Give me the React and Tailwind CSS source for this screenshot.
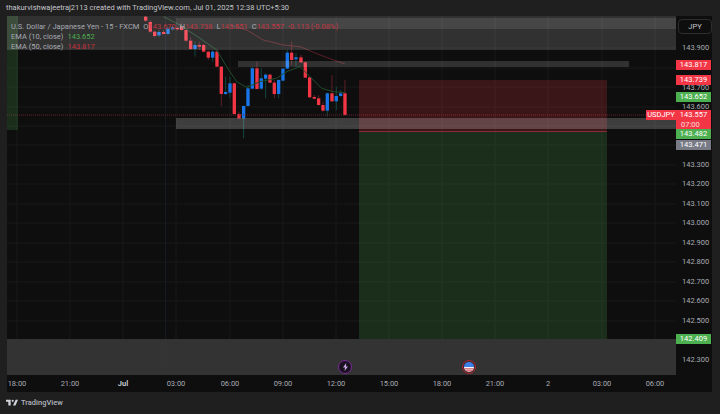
const candles = [
  [437, 50, 62, 48, 66, 'r'], [451, 66, 95, 60, 98, 'r'], [464, 95, 108, 92, 112, 'r'], [477, 96, 106, 90, 112, 'b'],
  [491, 96, 102, 90, 104, 'r'], [504, 86, 102, 80, 104, 'b'], [518, 82, 88, 78, 92, 'b'], [532, 84, 88, 80, 92, 'r'],
  [545, 78, 90, 70, 92, 'r'], [558, 90, 122, 88, 125, 'r'], [572, 122, 147, 112, 150, 'r'], [585, 135, 147, 125, 170, 'b'],
  [598, 135, 140, 125, 150, 'r'], [611, 135, 155, 132, 157, 'r'], [625, 155, 173, 152, 180, 'r'], [638, 155, 173, 150, 185, 'b'],
  [651, 155, 200, 148, 202, 'r'], [664, 200, 282, 198, 318, 'r'], [677, 276, 282, 230, 285, 'b'], [690, 250, 278, 230, 295, 'b'],
  [703, 250, 342, 248, 344, 'r'], [717, 342, 355, 335, 357, 'r'], [731, 318, 355, 316, 415, 'b'], [744, 265, 318, 255, 320, 'b'],
  [757, 205, 266, 200, 268, 'b'], [771, 205, 267, 185, 268, 'r'], [784, 235, 266, 205, 270, 'b'], [797, 224, 236, 220, 295, 'b'],
  [810, 224, 248, 222, 250, 'r'], [823, 248, 282, 240, 295, 'r'], [836, 240, 282, 238, 295, 'b'], [849, 206, 242, 204, 244, 'b'],
  [862, 158, 206, 150, 208, 'b'], [875, 158, 180, 125, 195, 'r'], [888, 172, 178, 160, 200, 'b'], [903, 172, 187, 165, 189, 'r'],
  [916, 187, 233, 185, 235, 'r'], [929, 232, 292, 230, 294, 'r'], [943, 291, 296, 285, 298, 'r'], [956, 295, 315, 285, 317, 'r'],
  [969, 315, 332, 305, 335, 'r'], [982, 280, 332, 278, 350, 'b'], [996, 280, 304, 225, 306, 'r'], [1009, 288, 304, 260, 330, 'b'],
  [1022, 280, 288, 270, 290, 'b'], [1035, 280, 345, 240, 347, 'r'],
];

const greenEma = '490,50 540,75 600,115 650,150 680,200 710,245 740,262 780,245 830,235 860,215 900,200 925,225 965,265 1000,275 1035,278';
const redEma = '690,75 740,90 790,120 850,135 900,140 960,165 1035,192';

const gridX = [17, 70, 123, 176, 230, 283, 336, 389, 442, 495, 548, 602, 655];
const gridY = [48, 68, 87, 107, 126, 145, 165, 184, 204, 223, 243, 262, 282, 301, 321, 340, 360];

const axisPrices = [
  ['143.900', 48], ['143.800', 68], ['143.700', 88], ['143.600', 107], ['143.300', 165], ['143.200', 184],
  ['143.100', 204], ['143.000', 223], ['142.900', 243], ['142.800', 262], ['142.700', 282], ['142.600', 301],
  ['142.500', 321], ['142.300', 360],
];

const priceTags = [
  ['143.817', 60, 'bg-[#f23645]'], ['143.739', 75, 'bg-[#f23645]'], ['143.652', 92, 'bg-[#4caf50]'],
  ['143.482', 129, 'bg-[#4caf50]'], ['143.471', 140, 'bg-[#787b86]'], ['142.409', 334, 'bg-[#4caf50]'],
];

const timeLabels = [
  ['18:00', 17], ['21:00', 70], ['Jul', 123, true], ['03:00', 176], ['06:00', 230], ['09:00', 283], ['12:00', 336],
  ['15:00', 389], ['18:00', 442], ['21:00', 495], ['2', 548], ['03:00', 602], ['06:00', 655],
];

// chart is drawn in page pixels, plot starts at 7,16
function ChartDrawing() {
  return (
    <svg className="absolute inset-0" width="669" height="359" viewBox="7 16 669 359">
      {gridX.map((x) => (
        <line key={x} x1={x} x2={x} y1="16" y2="375" stroke="#181818" strokeWidth="1" />
      ))}
      {gridY.map((y) => (
        <line key={y} x1="7" x2="676" y1={y} y2={y} stroke="#181818" strokeWidth="1" />
      ))}
      <line x1="165.5" x2="165.5" y1="16" y2="375" stroke="#151b24" strokeWidth="1" />
      {candles.map(([x, top, bottom, wickTop, wickBottom, c]) => (
        <g key={x} transform="scale(0.3333)">
          <line x1={x} x2={x} y1={wickTop} y2={wickBottom} stroke={c === 'r' ? '#5e2027' : '#14473f'} strokeWidth="3" />
          <rect x={x - 5} y={top} width="10" height={bottom - top} fill={c === 'r' ? '#f23645' : '#1976e8'} />
        </g>
      ))}
      <polyline points={greenEma} transform="scale(0.3333)" fill="none" stroke="#1f4d2a" strokeWidth="3" />
      <polyline points={redEma} transform="scale(0.3333)" fill="none" stroke="#5a1f26" strokeWidth="3" />
      <line x1="7" x2="676" y1="115" y2="115" stroke="#6b2028" strokeWidth="1" strokeDasharray="1 1" />
    </svg>
  );
}

function LogoMark() {
  return (
    <svg width="12" height="7" viewBox="0 0 36 20" fill="#d1d4dc">
      <path d="M14 2H0v6h7v11h7V2z" />
      <circle cx="20" cy="5" r="3.2" />
      <path d="M29 2h7l-7.5 17H21L29 2z" />
    </svg>
  );
}

export default function App() {
  return (
    <div className="w-[720px] h-[414px] flex flex-col overflow-hidden bg-[#1f1f1f] text-[#a8abb3] text-[7.5px] leading-none font-['Roboto',sans-serif]">
      <div className="h-4 flex items-center pl-1.5 text-[#c4c6cc]">
        thakurvishwajeetraj2113 created with TradingView.com, Jul 01, 2025 12:38 UTC+5:30
      </div>

      <div className="w-[705px] ml-[7px] flex flex-col">
        <div className="h-[359px] flex">
          <div className="relative w-[669px] overflow-hidden bg-[#0e0e0e]">
            <ChartDrawing />

            {/* drawn zones */}
            <div className="absolute left-0 top-0 w-[11px] h-[114px] bg-[#4caf50]/20" />
            <div className="absolute left-[352px] top-[64px] w-[248px] h-[51px] bg-[#f23645]/20" />
            <div className="absolute left-[352px] top-[115px] w-[248px] h-[1px] bg-[#8a2c35]" />
            <div className="absolute left-[352px] top-[116px] w-[248px] h-[207px] bg-[#4caf50]/20" />
            <div className="absolute left-0 right-0 top-0 h-[34px] bg-white/15" />
            <div className="absolute left-[169px] right-0 top-[2px] h-[11px] bg-white/10" />
            <div className="absolute left-[231px] top-[45px] w-[391px] h-[6px] bg-white/15" />
            <div className="absolute left-[169px] right-0 top-[102px] h-[11px] bg-white/20" />
            <div className="absolute left-0 right-0 top-[323px] bottom-0 bg-[#3a3a3a]/85" />

            {/* legend */}
            <div className="absolute left-1 top-[7px] flex flex-col gap-[2.5px]">
              <div className="flex items-center whitespace-nowrap">
                <span>U.S. Dollar / Japanese Yen - 15 - FXCM</span>
                <span className="ml-1">O</span>
                <span className="text-[#c23543]">143.670</span>
                <span className="ml-1">H</span>
                <span className="text-[#c23543]">143.738</span>
                <span className="ml-1">L</span>
                <span className="text-[#c23543]">143.551</span>
                <span className="ml-1">C</span>
                <span className="text-[#c23543]">143.557</span>
                <span className="ml-1 text-[#c23543]">-0.113 (-0.08%)</span>
              </div>
              <div className="flex gap-1">
                <span>EMA (10, close)</span>
                <span className="text-[#4caf50]">143.652</span>
              </div>
              <div className="flex gap-1">
                <span>EMA (50, close)</span>
                <span className="text-[#c8303c]">143.817</span>
              </div>
            </div>

            {/* USDJPY tag */}
            <div className="absolute right-0 top-[94px] w-[30px] h-[10px] flex items-center justify-center bg-[#f23645] text-white">
              USDJPY
            </div>

            {/* event markers */}
            <div className="absolute left-[331px] top-[344px] w-[14px] h-[14px] rounded-full border border-[#7b2a9b] bg-[#1a1220] flex items-center justify-center">
              <svg width="7" height="8" viewBox="0 0 7 8" fill="#c9a7e0">
                <path d="M4.2 0 1 4.4h2L2.6 8 6 3.4H4L4.2 0z" />
              </svg>
            </div>
            <div className="absolute left-[455px] top-[344px] w-[14px] h-[14px] rounded-full border border-[#b3202f] p-[1px]">
              <svg width="10" height="10" viewBox="0 0 10 10" className="rounded-full">
                <rect width="10" height="5" fill="#3f7fe8" />
                <rect y="5" width="10" height="5" fill="#f5f5f5" />
                <rect y="6.4" width="10" height="1" fill="#d0303f" />
                <rect y="8.4" width="10" height="1" fill="#d0303f" />
              </svg>
            </div>
          </div>

          {/* price axis */}
          <div className="relative flex-1 bg-[#0e0e0e]">
            {axisPrices.map(([price, y]) => (
              <span key={price} className="absolute left-[6px] -translate-y-1/2" style={{ top: y - 16 }}>
                {price}
              </span>
            ))}
            <div className="absolute left-[2px] top-[3px] w-[34px] h-[15px] flex items-center justify-center rounded-sm border border-[#2e2e2e] text-[#c4c6cc]">
              JPY
            </div>
            {priceTags.map(([price, y, color]) => (
              <div
                key={price}
                className={`absolute left-0 w-[35px] h-[10px] flex items-center justify-center text-white ${color}`}
                style={{ top: y - 16 }}
              >
                {price}
              </div>
            ))}
            <div className="absolute left-0 top-[94px] w-[35px] h-[19px] flex flex-col items-center justify-center gap-[2px] bg-[#f23645] text-white">
              <span>143.557</span>
              <span className="self-start pl-[5px] text-white/80">07:00</span>
            </div>
          </div>
        </div>

        {/* time axis */}
        <div className="relative h-[17px] bg-[#0e0e0e]">
          {timeLabels.map(([label, x, bold]) => (
            <span
              key={`${label}-${x}`}
              className={`absolute top-[5px] -translate-x-1/2 ${bold ? 'font-bold text-[#c4c6cc]' : ''}`}
              style={{ left: x - 7 }}
            >
              {label}
            </span>
          ))}
        </div>
      </div>

      {/* footer */}
      <div className="flex-1 flex items-center gap-[3px] pl-1.5 pb-[1px] text-[#b2b5be]">
        <LogoMark />
        <span className="font-medium">TradingView</span>
      </div>
    </div>
  );
}
